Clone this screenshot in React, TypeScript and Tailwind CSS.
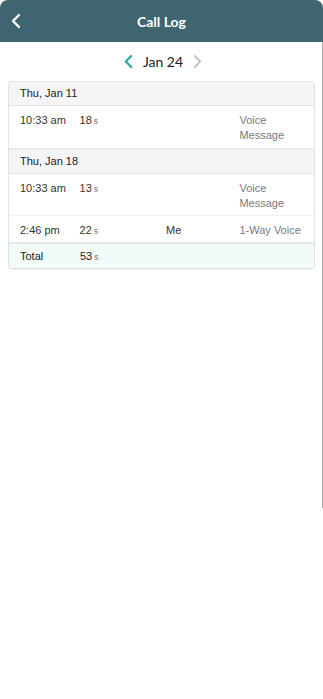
import React from 'react';

type Row = { time: string; secs: string; who?: string; kind: string; tall?: boolean };
type Group = { day: string; rows: Row[] };

const groups: Group[] = [
  { day: 'Thu, Jan 11', rows: [{ time: '10:33 am', secs: '18', kind: 'Voice Message', tall: true }] },
  {
    day: 'Thu, Jan 18',
    rows: [
      { time: '10:33 am', secs: '13', kind: 'Voice Message', tall: true },
      { time: '2:46 pm', secs: '22', who: 'Me', kind: '1-Way Voice' },
    ],
  },
];

function Chevron({ dir, className }: { dir: 'left' | 'right'; className: string }) {
  return (
    <svg viewBox="0 0 10 16" className={className} fill="none" stroke="currentColor" strokeWidth={2.4} strokeLinecap="round" strokeLinejoin="round">
      {dir === 'left' ? <path d="M8 2 L2 8 L8 14" /> : <path d="M2 2 L8 8 L2 14" />}
    </svg>
  );
}

function Secs({ n }: { n: string }) {
  return (
    <span>
      {n}
      <span className="ml-[2px] text-[8.5px] text-[#777]">s</span>
    </span>
  );
}

export default function App() {
  return (
    <div className="w-[323px] min-h-[699px] bg-white" style={{ fontFamily: '"Liberation Sans", Arial, sans-serif' }}>
      {/* Header */}
      <header className="relative h-[42px] rounded-t-[8px] bg-[#3e6570] flex items-center justify-center">
        <button className="absolute left-[11px] top-[13px] text-white">
          <Chevron dir="left" className="w-[10px] h-[16px]" />
        </button>
        <h1 className="text-white text-[14px] font-bold" style={{ fontFamily: 'Lato, "Open Sans", sans-serif' }}>
          Call Log
        </h1>
      </header>

      <div className="h-[466px] border-r border-[#a9a9a9]">
        {/* Date nav */}
        <div className="h-[39px] flex items-center justify-center gap-[10px] pl-[4px]" style={{ fontFamily: 'Lato, "Open Sans", sans-serif' }}>
          <Chevron dir="left" className="w-[9px] h-[15px] text-[#27a9a1]" />
          <span className="text-[14px] text-[#222]">Jan 24</span>
          <Chevron dir="right" className="w-[9px] h-[15px] text-[#c4c4c8]" />
        </div>

        {/* Table */}
        <div className="mx-[8px] w-[307px] rounded-[3px] border border-[#e2e2e6] shadow-[0_1px_1px_rgba(0,0,0,0.05)] text-[11px] text-[#333] overflow-hidden">
          {groups.map((g) => (
            <div key={g.day}>
              <div className="h-[24px] bg-[#f5f5f7] border-b border-[#e2e2e6] flex items-center px-[11px] text-[#222]">
                {g.day}
              </div>
              {g.rows.map((r, i) => {
                const last = i === g.rows.length - 1;
                return (
                  <div
                    key={r.time + i}
                    className={`flex px-[11px] pt-[7px] ${r.tall ? (last ? 'pb-[5px]' : 'pb-[4px]') : 'pb-[3px]'} ${last ? 'border-b-2 border-[#e8e8ec]' : 'border-b border-[#f0f0f2]'}`}
                  >
                    <div className="w-[60px] leading-[15px]">{r.time}</div>
                    <div className="w-[87px] leading-[15px]"><Secs n={r.secs} /></div>
                    <div className="w-[74px] leading-[15px]">{r.who}</div>
                    <div className="w-[64px] leading-[15px] text-[#7a7a7a]">{r.kind}</div>
                  </div>
                );
              })}
            </div>
          ))}
          <div className="h-[24px] bg-[#f2fafa] flex items-center px-[11px] text-[#222]">
            <div className="w-[60px]">Total</div>
            <div><Secs n="53" /></div>
          </div>
        </div>
      </div>
    </div>
  );
}
